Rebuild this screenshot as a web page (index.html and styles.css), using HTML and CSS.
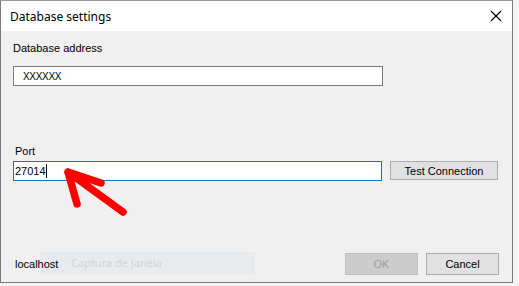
FILE: index.html
```html
<!DOCTYPE html>
<html lang="en">
<head>
  <meta charset="UTF-8" />
  <title>Database settings</title>
  <link rel="stylesheet" href="styles.css">
</head>
<body>

  <div class="window">
    <div class="titlebar">
      <span class="title">Database settings</span>
      <svg class="close" width="12" height="12" viewBox="0 0 12 12">
        <path d="M1 1 L11 11 M11 1 L1 11" stroke="#000" stroke-width="1.1" fill="none"/>
      </svg>
    </div>

    <div class="content">
      <div class="label">Database address</div>
      <div class="textbox address"><span class="value">XXXXXX</span></div>

      <div class="label port-label">Port</div>
      <div class="row">
        <div class="textbox port focused"><span class="value">27014</span><span class="caret"></span></div>
        <button class="btn test">Test Connection</button>
      </div>

      <div class="footer">
        <span class="ghost">Captura de Janela</span>
        <span class="host">localhost</span>
        <div class="actions">
          <button class="btn ok" disabled>OK</button>
          <button class="btn cancel">Cancel</button>
        </div>
      </div>
    </div>

    <!-- red annotation arrow -->
    <svg class="arrow" width="140" height="230" viewBox="0 0 140 230">
      <path d="M68 172 L123 212 M68 172 L101 183 M68 172 L77 204" stroke="#ff0000" stroke-width="7.5" stroke-linecap="round" stroke-linejoin="round" fill="none"/>
    </svg>
  </div>

</body>
</html>
```

FILE: styles.css
```css
* {
  box-sizing: border-box;
}

body {
  margin: 0;
  background: #f4f4f4;
  font-family: "Liberation Sans", Arial, sans-serif;
  font-size: 11px;
  color: #000;
}

.window {
  position: relative;
  width: 513px;
  height: 283px;
  background: #f0f0f0;
  border: 1px solid #7a7a7a;
  border-top-color: #9a9a9a;
}

.titlebar {
  height: 30px;
  background: #fff;
  display: flex;
  align-items: center;
  justify-content: space-between;
  padding: 0 9px 0 9px;
}

.title {
  font-family: "Noto Sans", "Liberation Sans", sans-serif;
  font-size: 12px;
  color: #000;
}

.close {
  margin-right: 1px;
}

.content {
  padding: 0 13px 0 12px;
}

.label {
  margin-top: 11px;
  line-height: 13px;
}

.port-label {
  margin-top: 59px;
  margin-left: 2px;
}

.textbox {
  height: 20px;
  background: #fff;
  border: 1px solid #7a7a7a;
  display: flex;
  align-items: center;
  line-height: 13px;
}

.address {
  width: 370px;
  margin-top: 11px;
  padding-left: 9px;
}

.address .value {
  font-size: 10px;
  letter-spacing: -0.3px;
}

.row {
  display: flex;
  gap: 8px;
  margin-top: 3px;
}

.port {
  width: 369px;
  padding-left: 1px;
}

.focused {
  border-color: #0078d7;
}

.caret {
  display: inline-block;
  width: 1px;
  height: 14px;
  background: #000;
}

.btn {
  font-family: "Liberation Sans", Arial, sans-serif;
  font-size: 11px;
  color: #000;
  background: #e1e1e1;
  border: 1px solid #adadad;
  padding: 0;
  margin: 0;
}

.test {
  width: 108px;
  height: 19px;
}

.footer {
  position: relative;
  display: flex;
  align-items: center;
  justify-content: space-between;
  margin-top: 72px;
  height: 22px;
}

.host {
  position: relative;
  z-index: 1;
  margin-left: 2px;
}

.ghost {
  position: absolute;
  left: 27px;
  top: -1px;
  width: 215px;
  height: 22px;
  background: #e7ebee;
  color: #d3d6d8;
  font-family: "Noto Sans", sans-serif;
  font-size: 11px;
  line-height: 22px;
  padding-left: 31px;
}

.actions {
  display: flex;
  gap: 8px;
}

.ok, .cancel {
  width: 73px;
  height: 22px;
}

.ok {
  background: #cccccc;
  border-color: #bfbfbf;
  color: #a0a0a0;
}

.arrow {
  position: absolute;
  left: -1px;
  top: -1px;
  pointer-events: none;
}
```
